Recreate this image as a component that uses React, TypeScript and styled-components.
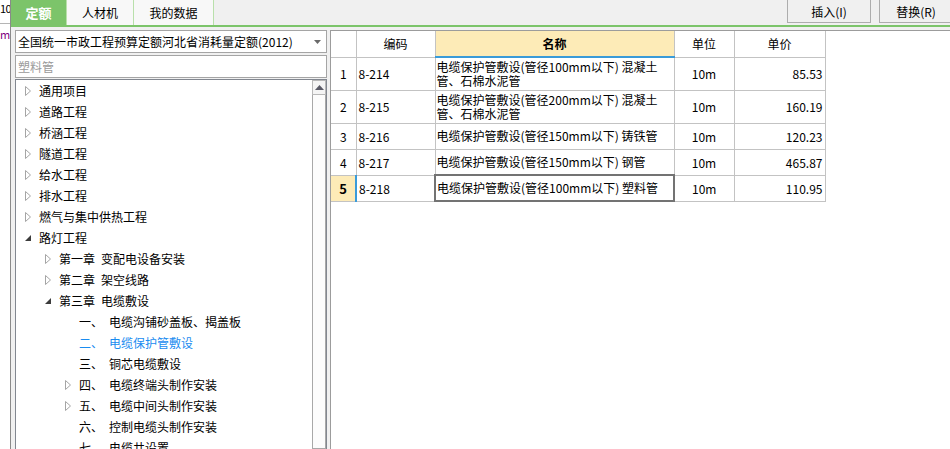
import React from "react";
import styled, { createGlobalStyle } from "styled-components";

const GlobalStyle = createGlobalStyle`
  html, body { margin: 0; padding: 0; }
  body {
    font-family: "Noto Sans CJK SC", "Noto Sans", sans-serif;
    font-size: 12px;
    color: #000;
    background: #fff;
  }
  * { box-sizing: border-box; }
`;

const Frame = styled.div`
  width: 950px;
  height: 449px;
  overflow: hidden;
  display: flex;
`;

const LeftStrip = styled.div`
  width: 11px;
  flex-shrink: 0;
  background: #fff;
  border-right: 1px solid #8a8a8a;
  display: flex;
  flex-direction: column;
  overflow: hidden;
`;

const StripTop = styled.div`
  height: 24px;
  border-bottom: 1px solid #b5b5b5;
  font-size: 11px;
  letter-spacing: -0.6px;
  line-height: 17px;
  white-space: nowrap;
`;

const StripUnit = styled.div`
  color: #800080;
  font-size: 11px;
  line-height: 20px;
`;

const Main = styled.div`
  flex: 1;
  min-width: 0;
  display: flex;
  flex-direction: column;
  background: #f0f0f0;
`;

const TabBar = styled.div`
  height: 27px;
  flex-shrink: 0;
  display: flex;
  align-items: flex-start;
  border-bottom: 2px solid #7cc46a;
  background: #f0f0f0;
  overflow: hidden;
`;

const Tab = styled.div<{ $active?: boolean; $w: number }>`
  width: ${(p) => p.$w}px;
  height: 25px;
  display: flex;
  align-items: center;
  justify-content: center;
  background: ${(p) => (p.$active ? "#7cc46a" : "#f8f8f8")};
  color: ${(p) => (p.$active ? "#fff" : "#000")};
  font-weight: ${(p) => (p.$active ? 700 : 400)};
  font-size: ${(p) => (p.$active ? "13px" : "12px")};
  border-right: 1px solid #b9e0ab;
`;

const Spacer = styled.div`
  flex: 1;
`;

const ToolButton = styled.div<{ $w: number }>`
  width: ${(p) => p.$w}px;
  flex-shrink: 0;
  height: 23px;
  margin-left: 8px;
  border: 1px solid #adadad;
  border-top: none;
  background: #f0f0f0;
  display: flex;
  align-items: center;
  justify-content: center;
  font-size: 12px;
  &:last-child {
    margin-right: -3px;
  }
`;

const Body = styled.div`
  flex: 1;
  min-height: 0;
  display: flex;
`;

const LeftPanel = styled.div`
  width: 318px;
  flex-shrink: 0;
  padding: 3px 2px 0 4px;
  display: flex;
  flex-direction: column;
`;

const Combo = styled.div`
  height: 23px;
  flex-shrink: 0;
  border: 1px solid #a5a5a5;
  background: #fff;
  display: flex;
  align-items: center;
  justify-content: space-between;
  padding: 0 5px 0 2px;
  margin-bottom: 2px;
  white-space: nowrap;
`;

const SearchInput = styled.input`
  height: 23px;
  flex-shrink: 0;
  border: 1px solid #a5a5a5;
  background: #fff;
  padding: 0 2px;
  margin: 0 0 1px 0;
  font-family: "Noto Sans CJK SC", "Noto Sans", sans-serif;
  font-size: 12px;
  outline: none;
  &::placeholder {
    color: #9a9a9a;
  }
`;

const TreeBox = styled.div`
  flex: 1;
  min-height: 0;
  border: 1px solid #828790;
  border-bottom: none;
  background: #fff;
  display: flex;
`;

const TreeList = styled.div`
  flex: 1;
  min-width: 0;
`;

const TreeRow = styled.div<{ $level: number; $selected?: boolean }>`
  height: 21px;
  display: flex;
  align-items: center;
  padding-left: ${(p) => 9 + p.$level * 20}px;
  color: ${(p) => (p.$selected ? "#1a8cf0" : "#000")};
  white-space: nowrap;
`;

const Toggle = styled.span`
  width: 14px;
  height: 21px;
  flex-shrink: 0;
  display: flex;
  align-items: center;
`;

const Prefix = styled.span`
  margin-right: 6px;
`;

const ScrollBar = styled.div`
  width: 14px;
  flex-shrink: 0;
  display: flex;
  flex-direction: column;
`;

const ScrollUp = styled.div`
  height: 15px;
  border: 1px solid #b8b8b8;
  background: #f4f4f4;
  display: flex;
  align-items: center;
  justify-content: center;
`;

const ScrollThumb = styled.div`
  flex: 1;
  border: 1px solid #a8a8a8;
  border-top: none;
  background: #fcfcfc;
`;

const RightPanel = styled.div`
  flex: 1;
  margin: 3px 0 0 1px;
  border-top: 1px solid #9c9c9c;
  border-left: 1px solid #9c9c9c;
  background: #fff;
  min-width: 0;
`;

const Grid = styled.table`
  border-collapse: collapse;
  table-layout: fixed;
  width: 493px;
  font-size: 12px;
  tr > *:first-child {
    border-left: none;
  }
  thead tr > * {
    border-top: none;
  }
`;

const HeadCell = styled.th<{ $active?: boolean }>`
  height: 26px;
  padding: 0;
  border: 1px solid #c3c3c3;
  border-bottom: ${(p) => (p.$active ? "2px solid #3a9bd9" : "1px solid #c3c3c3")};
  background: ${(p) => (p.$active ? "#fdebb7" : "#fff")};
  font-weight: ${(p) => (p.$active ? 700 : 400)};
  font-size: 12px;
  text-align: center;
`;

const NumCell = styled.td<{ $current?: boolean }>`
  padding: 0;
  border: 1px solid #c3c3c3;
  border-right: ${(p) => (p.$current ? "2px solid #3a9bd9" : "1px solid #c3c3c3")};
  background: ${(p) => (p.$current ? "#fdebb7" : "#fff")};
  font-weight: ${(p) => (p.$current ? 700 : 400)};
  font-size: ${(p) => (p.$current ? "13px" : "12px")};
  text-align: center;
`;

const Cell = styled.td<{ $align?: "left" | "center" | "right" }>`
  padding: 0 2px;
  border: 1px solid #c3c3c3;
  text-align: ${(p) => p.$align || "left"};
  white-space: nowrap;
`;

const NameCell = styled.td<{ $focus?: boolean }>`
  padding: 0 1px;
  border: ${(p) => (p.$focus ? "2px solid #737373" : "1px solid #c3c3c3")};
  white-space: pre-line;
  line-height: 14px;
`;

const Collapsed = () => (
  <svg width="6" height="10" viewBox="0 0 6 10">
    <path d="M0.5 0.5 L5.5 5 L0.5 9.5 Z" fill="none" stroke="#a5a5a5" strokeWidth="1" />
  </svg>
);

const Expanded = () => (
  <svg width="7" height="8" viewBox="0 0 7 8">
    <path d="M6 1 L6 7 L0 7 Z" fill="#3c3c3c" />
  </svg>
);

const ComboArrow = () => (
  <svg width="7" height="4" viewBox="0 0 7 4">
    <path d="M0 0 L7 0 L3.5 4 Z" fill="#6a6a6a" />
  </svg>
);

const UpArrow = () => (
  <svg width="9" height="5" viewBox="0 0 9 5">
    <path d="M0 5 L9 5 L4.5 0 Z" fill="#5a5a66" />
  </svg>
);

type Node = { level: number; prefix?: string; label: string; state?: "c" | "e"; selected?: boolean };

const tree: Node[] = [
  { level: 0, label: "通用项目", state: "c" },
  { level: 0, label: "道路工程", state: "c" },
  { level: 0, label: "桥涵工程", state: "c" },
  { level: 0, label: "隧道工程", state: "c" },
  { level: 0, label: "给水工程", state: "c" },
  { level: 0, label: "排水工程", state: "c" },
  { level: 0, label: "燃气与集中供热工程", state: "c" },
  { level: 0, label: "路灯工程", state: "e" },
  { level: 1, prefix: "第一章", label: "变配电设备安装", state: "c" },
  { level: 1, prefix: "第二章", label: "架空线路", state: "c" },
  { level: 1, prefix: "第三章", label: "电缆敷设", state: "e" },
  { level: 2, prefix: "一、", label: "电缆沟铺砂盖板、揭盖板" },
  { level: 2, prefix: "二、", label: "电缆保护管敷设", selected: true },
  { level: 2, prefix: "三、", label: "铜芯电缆敷设" },
  { level: 2, prefix: "四、", label: "电缆终端头制作安装", state: "c" },
  { level: 2, prefix: "五、", label: "电缆中间头制作安装", state: "c" },
  { level: 2, prefix: "六、", label: "控制电缆头制作安装" },
  { level: 2, prefix: "七、", label: "电缆井设置" },
];

type Row = { no: number; code: string; name: string; unit: string; price: string; h: number };

const rows: Row[] = [
  { no: 1, code: "8-214", name: "电缆保护管敷设(管径100mm以下) 混凝土\n管、石棉水泥管", unit: "10m", price: "85.53", h: 33 },
  { no: 2, code: "8-215", name: "电缆保护管敷设(管径200mm以下) 混凝土\n管、石棉水泥管", unit: "10m", price: "160.19", h: 33 },
  { no: 3, code: "8-216", name: "电缆保护管敷设(管径150mm以下) 铸铁管", unit: "10m", price: "120.23", h: 26 },
  { no: 4, code: "8-217", name: "电缆保护管敷设(管径150mm以下) 钢管", unit: "10m", price: "465.87", h: 26 },
  { no: 5, code: "8-218", name: "电缆保护管敷设(管径100mm以下) 塑料管", unit: "10m", price: "110.95", h: 26 },
];

export default function App() {
  return (
    <>
      <GlobalStyle />
      <Frame>
        <LeftStrip>
          <StripTop>10</StripTop>
          <StripUnit>m</StripUnit>
        </LeftStrip>
        <Main>
          <TabBar>
            <Tab $active $w={56}>定额</Tab>
            <Tab $w={67}>人材机</Tab>
            <Tab $w={80}>我的数据</Tab>
            <Spacer />
            <ToolButton $w={84}>插入(I)</ToolButton>
            <ToolButton $w={74}>替换(R)</ToolButton>
          </TabBar>
          <Body>
            <LeftPanel>
              <Combo>
                <span>全国统一市政工程预算定额河北省消耗量定额(2012)</span>
                <ComboArrow />
              </Combo>
              <SearchInput placeholder="塑料管" readOnly />
              <TreeBox>
                <TreeList>
                  {tree.map((n, i) => (
                    <TreeRow key={i} $level={n.level} $selected={n.selected}>
                      <Toggle>
                        {n.state === "c" && <Collapsed />}
                        {n.state === "e" && <Expanded />}
                      </Toggle>
                      {n.prefix && <Prefix>{n.prefix}</Prefix>}
                      {n.label}
                    </TreeRow>
                  ))}
                </TreeList>
                <ScrollBar>
                  <ScrollUp>
                    <UpArrow />
                  </ScrollUp>
                  <ScrollThumb />
                </ScrollBar>
              </TreeBox>
            </LeftPanel>
            <RightPanel>
              <Grid>
                <colgroup>
                  <col style={{ width: 25 }} />
                  <col style={{ width: 79 }} />
                  <col style={{ width: 239 }} />
                  <col style={{ width: 60 }} />
                  <col style={{ width: 91 }} />
                </colgroup>
                <thead>
                  <tr>
                    <HeadCell />
                    <HeadCell>编码</HeadCell>
                    <HeadCell $active>名称</HeadCell>
                    <HeadCell>单位</HeadCell>
                    <HeadCell>单价</HeadCell>
                  </tr>
                </thead>
                <tbody>
                  {rows.map((r) => {
                    const cur = r.no === 5;
                    return (
                      <tr key={r.no} style={{ height: r.h }}>
                        <NumCell $current={cur}>{r.no}</NumCell>
                        <Cell>{r.code}</Cell>
                        <NameCell $focus={cur}>{r.name}</NameCell>
                        <Cell $align="center">{r.unit}</Cell>
                        <Cell $align="right">{r.price}</Cell>
                      </tr>
                    );
                  })}
                </tbody>
              </Grid>
            </RightPanel>
          </Body>
        </Main>
      </Frame>
    </>
  );
}
